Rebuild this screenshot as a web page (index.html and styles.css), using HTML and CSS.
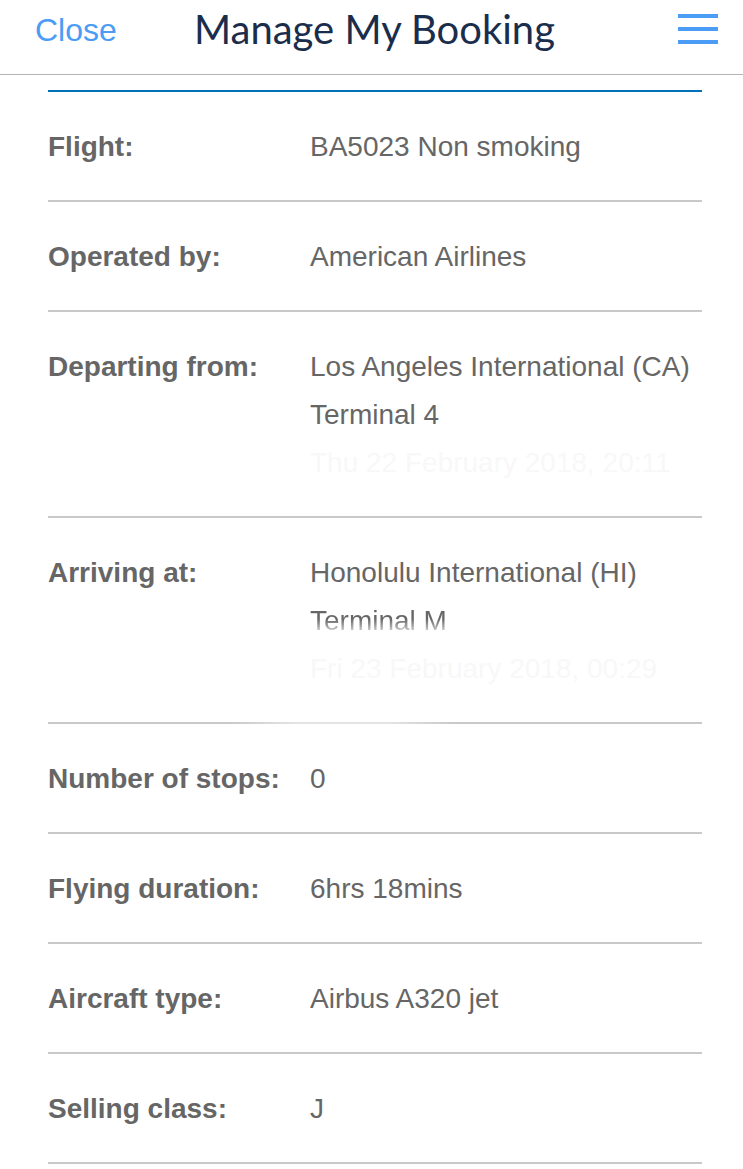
FILE: index.html
```html
<!DOCTYPE html>
<html lang="en">
<head>
    <meta charset="UTF-8">
    <meta name="viewport" content="width=device-width, initial-scale=1.0">
    <title>Manage My Booking</title>
    <link rel="stylesheet" href="styles.css">
</head>
<body>
    <header class="topbar">
        <a class="close" href="#">Close</a>
        <h1 class="title">Manage My Booking</h1>
        <button class="menu" type="button" aria-label="Menu">
            <span></span><span></span><span></span>
        </button>
    </header>

    <div class="details">
        <div class="row">
            <div class="label">Flight:</div>
            <div class="value">BA5023 Non smoking</div>
        </div>
        <div class="row">
            <div class="label">Operated by:</div>
            <div class="value">American Airlines</div>
        </div>
        <div class="row">
            <div class="label">Departing from:</div>
            <div class="value">
                Los Angeles International (CA)<br>
                Terminal 4<br>
                <span class="faded">Thu 22 February 2018, 20:11</span>
            </div>
        </div>
        <div class="row fading">
            <div class="label">Arriving at:</div>
            <div class="value">
                Honolulu International (HI)<br>
                <span class="fade-out">Terminal M</span><br>
                <span class="faded">Fri 23 February 2018, 00:29</span>
            </div>
        </div>
        <div class="row">
            <div class="label">Number of stops:</div>
            <div class="value">0</div>
        </div>
        <div class="row">
            <div class="label">Flying duration:</div>
            <div class="value">6hrs 18mins</div>
        </div>
        <div class="row">
            <div class="label">Aircraft type:</div>
            <div class="value">Airbus A320 jet</div>
        </div>
        <div class="row">
            <div class="label">Selling class:</div>
            <div class="value">J</div>
        </div>
    </div>
</body>
</html>
```

FILE: styles.css
```css
body {
    margin: 0;
    background-color: #ffffff;
    font-family: "Liberation Sans", Arial, sans-serif;
}
.topbar {
    display: grid;
    grid-template-columns: 1fr auto 1fr;
    align-items: center;
    height: 74px;
    border-bottom: 1px solid #b4b4b4;
}
.close {
    padding-left: 35px;
    padding-bottom: 14px;
    font-size: 32px;
    color: #4b9cf5;
    text-decoration: none;
}
.title {
    margin: 0 0 0 6px;
    padding-bottom: 16px;
    font-family: Lato, "Open Sans", sans-serif;
    font-weight: 400;
    font-size: 40px;
    color: #1b2d4c;
}
.menu {
    justify-self: end;
    display: flex;
    flex-direction: column;
    gap: 9px;
    margin-right: 25px;
    margin-bottom: 16px;
    padding: 0;
    border: none;
    background: none;
}
.menu span {
    display: block;
    width: 40px;
    height: 4px;
    background-color: #4b9cf5;
}
.details {
    margin: 15px 41px 0 48px;
    border-top: 2px solid #0071b9;
}
.row {
    display: grid;
    grid-template-columns: 262px 1fr;
    padding: 31px 0 29px;
    border-bottom: 2px solid #c9c9c9;
    font-size: 28px;
    line-height: 48px;
    color: #666666;
}
.row.fading {
    border-image: linear-gradient(90deg, #c9c9c9 28%, #e4e4e4 38%, #e4e4e4 52%, #c9c9c9 62%) 1;
}
.label {
    font-weight: bold;
}
.faded {
    color: #f8f8f8;
}
.fade-out {
    background: linear-gradient(180deg, #666666 45%, #d0d0d0 85%);
    -webkit-background-clip: text;
    background-clip: text;
    color: transparent;
}
```
